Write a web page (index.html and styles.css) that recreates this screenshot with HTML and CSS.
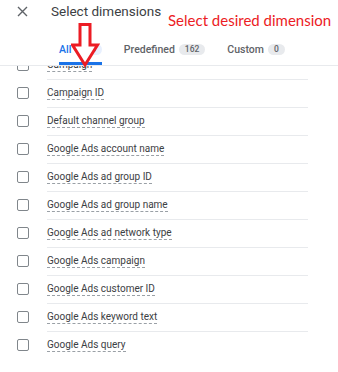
FILE: index.html
```html
<!DOCTYPE html>
<html lang="en">
<head>
    <meta charset="UTF-8">
    <meta name="viewport" content="width=device-width, initial-scale=1.0">
    <title>Select dimensions</title>
    <link rel="stylesheet" href="styles.css">
</head>
<body>
    <div class="panel">
        <!-- Baslik ve sekmeler -->
        <div class="header">
            <div class="title-bar">
                <svg class="close" width="11" height="11" viewBox="0 0 11 11">
                    <path d="M1 1 L10 10 M10 1 L1 10" stroke="#5f6368" stroke-width="1.4" fill="none"/>
                </svg>
                <span class="title">Select dimensions</span>
            </div>
            <div class="tabs">
                <div class="tab active">All <span class="count">226</span></div>
                <div class="tab">Predefined <span class="count">162</span></div>
                <div class="tab">Custom <span class="count">0</span></div>
            </div>
        </div>

        <!-- Boyut listesi -->
        <div class="list">
            <div class="list-inner">
                <div class="row"><span class="box"></span><div class="cell"><span class="name">Campaign</span></div></div>
                <div class="row"><span class="box"></span><div class="cell"><span class="name">Campaign ID</span></div></div>
                <div class="row"><span class="box"></span><div class="cell"><span class="name">Default channel group</span></div></div>
                <div class="row"><span class="box"></span><div class="cell"><span class="name">Google Ads account name</span></div></div>
                <div class="row"><span class="box"></span><div class="cell"><span class="name">Google Ads ad group ID</span></div></div>
                <div class="row"><span class="box"></span><div class="cell"><span class="name">Google Ads ad group name</span></div></div>
                <div class="row"><span class="box"></span><div class="cell"><span class="name">Google Ads ad network type</span></div></div>
                <div class="row"><span class="box"></span><div class="cell"><span class="name">Google Ads campaign</span></div></div>
                <div class="row"><span class="box"></span><div class="cell"><span class="name">Google Ads customer ID</span></div></div>
                <div class="row"><span class="box"></span><div class="cell"><span class="name">Google Ads keyword text</span></div></div>
                <div class="row last"><span class="box"></span><div class="cell"><span class="name">Google Ads query</span></div></div>
            </div>
        </div>

        <!-- Ekran goruntusu notu -->
        <div class="note">Select desired dimension</div>
        <svg class="arrow" width="30" height="46" viewBox="0 0 30 46">
            <path d="M7.5 1.5 H17.5 V22 H25 L12.5 42 L0 22 H7.5 Z" fill="#fff" stroke="#ec1c24" stroke-width="3" stroke-linejoin="miter" transform="translate(1.5 0)"/>
        </svg>
    </div>
</body>
</html>
```

FILE: styles.css
```css
body {
    margin: 0;
    background: #fff;
    font-family: Roboto, Arial, sans-serif;
    color: #3c4043;
}

.panel {
    position: relative;
    width: 338px;
    height: 372px;
    overflow: hidden;
}

.header {
    height: 65px;
    border-bottom: 1px solid #e8eaed;
    position: relative;
    z-index: 1;
    background: #fff;
}

.title-bar {
    display: flex;
    align-items: center;
    height: 22px;
    padding-left: 17px;
}

.close {
    margin-right: 23px;
}

.title {
    font-size: 13.5px;
    color: #3c4043;
}

.tabs {
    display: flex;
    gap: 22px;
    margin-left: 59px;
    margin-top: 19px;
}

.tab {
    display: flex;
    align-items: center;
    gap: 4px;
    font-size: 10.5px;
    font-weight: 500;
    color: #5f6368;
    height: 16px;
    padding-bottom: 5px;
    border-bottom: 3px solid transparent;
}

.tab.active {
    color: #1a73e8;
    border-bottom-color: #1a73e8;
}

.count {
    background: #e8eaed;
    color: #5f6368;
    font-size: 8.5px;
    border-radius: 6px;
    padding: 1px 6px;
    line-height: 9px;
}

.tab.active .count {
    background: #e8f0fe;
    color: #1a73e8;
}

.list {
    height: 306px;
    overflow: hidden;
}

.list-inner {
    margin-top: -14px;
    padding-right: 30px;
}

.row {
    display: flex;
    align-items: stretch;
}

.box {
    width: 10px;
    height: 10px;
    border: 1.5px solid #80868b;
    border-radius: 2px;
    margin: 7px 18px 0 17px;
}

.cell {
    flex: 1;
    height: 27px;
    display: flex;
    align-items: center;
    border-bottom: 1px solid #e8eaed;
}

.row.last .cell {
    border-bottom-color: transparent;
}

.name {
    font-size: 10px;
    line-height: 12px;
    border-bottom: 1px dashed #9aa0a6;
}

.note {
    position: absolute;
    left: 168px;
    top: 11px;
    white-space: nowrap;
    font-family: Lato, "Open Sans", sans-serif;
    font-size: 15px;
    color: #ec1c24;
    z-index: 2;
}

.arrow {
    position: absolute;
    left: 71px;
    top: 23px;
    z-index: 2;
}
```
